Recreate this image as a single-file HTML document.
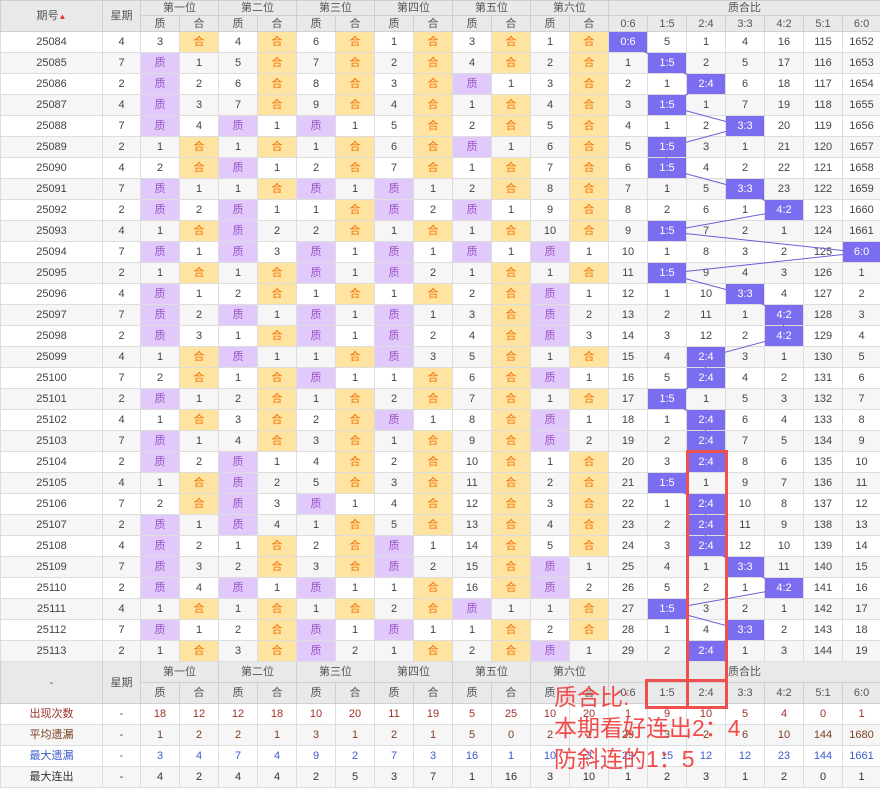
<!DOCTYPE html>
<html><head><meta charset="utf-8">
<style>
body{margin:0;width:880px;height:788px;overflow:hidden;background:#fff;font-family:"Liberation Sans","Noto Sans CJK SC",sans-serif;position:relative}
table{border-collapse:collapse;table-layout:fixed;width:880px;font-size:11px;color:#444;position:absolute;left:0;top:0}
td,th{border:1px solid #ddd;text-align:center;padding:0;white-space:nowrap;overflow:hidden;line-height:12px}
th{background:#e9e9e9;font-weight:normal;color:#555;font-size:11px;border-color:#d0d0d0}
tr.hd1 th{height:14px}tr.hd2 th{height:15px}
tr.d td{height:20px}
tr.d:nth-child(even) td{background:#f6f6f6}
tr.g td{border-top:1px solid #aaa}
td.z{background:#e2c9fb!important;color:#9a55c8}
td.h{background:#ffe3a1!important;color:#f27000}
td.k{background:#7b6df0!important;color:#fff;position:relative;z-index:3}
tr.f1 th{height:20px}tr.f2 th{height:20px}
tr.s td{height:20px}
tr.s:nth-child(even) td{background:#f6f6f6}
.r1 td{color:#a0332a}.r2 td{color:#7a3f20}.r3 td{color:#3b5bcc}.r4 td{color:#333}
.ov{position:absolute;color:#f24b4b;font-size:23px;left:554px;line-height:30px;z-index:5}
.bx{position:absolute;border:3px solid #ee5050;z-index:5}
svg{z-index:2}
</style></head><body>
<table>
<colgroup><col style="width:102px"><col style="width:38px"><col style="width:39px"><col style="width:39px"><col style="width:39px"><col style="width:39px"><col style="width:39px"><col style="width:39px"><col style="width:39px"><col style="width:39px"><col style="width:39px"><col style="width:39px"><col style="width:39px"><col style="width:39px"><col style="width:39px"><col style="width:39px"><col style="width:39px"><col style="width:39px"><col style="width:39px"><col style="width:39px"><col style="width:38px"></colgroup>
<tr class="hd1"><th rowspan="2">期号<span style="color:#e33;font-size:8px">▲</span></th><th rowspan="2">星期</th><th colspan="2">第一位</th><th colspan="2">第二位</th><th colspan="2">第三位</th><th colspan="2">第四位</th><th colspan="2">第五位</th><th colspan="2">第六位</th><th colspan="7">质合比</th></tr>
<tr class="hd2"><th>质</th><th>合</th><th>质</th><th>合</th><th>质</th><th>合</th><th>质</th><th>合</th><th>质</th><th>合</th><th>质</th><th>合</th><th>0:6</th><th>1:5</th><th>2:4</th><th>3:3</th><th>4:2</th><th>5:1</th><th>6:0</th></tr>
<tr class="d"><td>25084</td><td>4</td><td>3</td><td class="h">合</td><td>4</td><td class="h">合</td><td>6</td><td class="h">合</td><td>1</td><td class="h">合</td><td>3</td><td class="h">合</td><td>1</td><td class="h">合</td><td class="k">0:6</td><td>5</td><td>1</td><td>4</td><td>16</td><td>115</td><td>1652</td></tr>
<tr class="d"><td>25085</td><td>7</td><td class="z">质</td><td>1</td><td>5</td><td class="h">合</td><td>7</td><td class="h">合</td><td>2</td><td class="h">合</td><td>4</td><td class="h">合</td><td>2</td><td class="h">合</td><td>1</td><td class="k">1:5</td><td>2</td><td>5</td><td>17</td><td>116</td><td>1653</td></tr>
<tr class="d"><td>25086</td><td>2</td><td class="z">质</td><td>2</td><td>6</td><td class="h">合</td><td>8</td><td class="h">合</td><td>3</td><td class="h">合</td><td class="z">质</td><td>1</td><td>3</td><td class="h">合</td><td>2</td><td>1</td><td class="k">2:4</td><td>6</td><td>18</td><td>117</td><td>1654</td></tr>
<tr class="d"><td>25087</td><td>4</td><td class="z">质</td><td>3</td><td>7</td><td class="h">合</td><td>9</td><td class="h">合</td><td>4</td><td class="h">合</td><td>1</td><td class="h">合</td><td>4</td><td class="h">合</td><td>3</td><td class="k">1:5</td><td>1</td><td>7</td><td>19</td><td>118</td><td>1655</td></tr>
<tr class="d"><td>25088</td><td>7</td><td class="z">质</td><td>4</td><td class="z">质</td><td>1</td><td class="z">质</td><td>1</td><td>5</td><td class="h">合</td><td>2</td><td class="h">合</td><td>5</td><td class="h">合</td><td>4</td><td>1</td><td>2</td><td class="k">3:3</td><td>20</td><td>119</td><td>1656</td></tr>
<tr class="d g"><td>25089</td><td>2</td><td>1</td><td class="h">合</td><td>1</td><td class="h">合</td><td>1</td><td class="h">合</td><td>6</td><td class="h">合</td><td class="z">质</td><td>1</td><td>6</td><td class="h">合</td><td>5</td><td class="k">1:5</td><td>3</td><td>1</td><td>21</td><td>120</td><td>1657</td></tr>
<tr class="d"><td>25090</td><td>4</td><td>2</td><td class="h">合</td><td class="z">质</td><td>1</td><td>2</td><td class="h">合</td><td>7</td><td class="h">合</td><td>1</td><td class="h">合</td><td>7</td><td class="h">合</td><td>6</td><td class="k">1:5</td><td>4</td><td>2</td><td>22</td><td>121</td><td>1658</td></tr>
<tr class="d"><td>25091</td><td>7</td><td class="z">质</td><td>1</td><td>1</td><td class="h">合</td><td class="z">质</td><td>1</td><td class="z">质</td><td>1</td><td>2</td><td class="h">合</td><td>8</td><td class="h">合</td><td>7</td><td>1</td><td>5</td><td class="k">3:3</td><td>23</td><td>122</td><td>1659</td></tr>
<tr class="d"><td>25092</td><td>2</td><td class="z">质</td><td>2</td><td class="z">质</td><td>1</td><td>1</td><td class="h">合</td><td class="z">质</td><td>2</td><td class="z">质</td><td>1</td><td>9</td><td class="h">合</td><td>8</td><td>2</td><td>6</td><td>1</td><td class="k">4:2</td><td>123</td><td>1660</td></tr>
<tr class="d"><td>25093</td><td>4</td><td>1</td><td class="h">合</td><td class="z">质</td><td>2</td><td>2</td><td class="h">合</td><td>1</td><td class="h">合</td><td>1</td><td class="h">合</td><td>10</td><td class="h">合</td><td>9</td><td class="k">1:5</td><td>7</td><td>2</td><td>1</td><td>124</td><td>1661</td></tr>
<tr class="d g"><td>25094</td><td>7</td><td class="z">质</td><td>1</td><td class="z">质</td><td>3</td><td class="z">质</td><td>1</td><td class="z">质</td><td>1</td><td class="z">质</td><td>1</td><td class="z">质</td><td>1</td><td>10</td><td>1</td><td>8</td><td>3</td><td>2</td><td>125</td><td class="k">6:0</td></tr>
<tr class="d"><td>25095</td><td>2</td><td>1</td><td class="h">合</td><td>1</td><td class="h">合</td><td class="z">质</td><td>1</td><td class="z">质</td><td>2</td><td>1</td><td class="h">合</td><td>1</td><td class="h">合</td><td>11</td><td class="k">1:5</td><td>9</td><td>4</td><td>3</td><td>126</td><td>1</td></tr>
<tr class="d"><td>25096</td><td>4</td><td class="z">质</td><td>1</td><td>2</td><td class="h">合</td><td>1</td><td class="h">合</td><td>1</td><td class="h">合</td><td>2</td><td class="h">合</td><td class="z">质</td><td>1</td><td>12</td><td>1</td><td>10</td><td class="k">3:3</td><td>4</td><td>127</td><td>2</td></tr>
<tr class="d"><td>25097</td><td>7</td><td class="z">质</td><td>2</td><td class="z">质</td><td>1</td><td class="z">质</td><td>1</td><td class="z">质</td><td>1</td><td>3</td><td class="h">合</td><td class="z">质</td><td>2</td><td>13</td><td>2</td><td>11</td><td>1</td><td class="k">4:2</td><td>128</td><td>3</td></tr>
<tr class="d"><td>25098</td><td>2</td><td class="z">质</td><td>3</td><td>1</td><td class="h">合</td><td class="z">质</td><td>1</td><td class="z">质</td><td>2</td><td>4</td><td class="h">合</td><td class="z">质</td><td>3</td><td>14</td><td>3</td><td>12</td><td>2</td><td class="k">4:2</td><td>129</td><td>4</td></tr>
<tr class="d g"><td>25099</td><td>4</td><td>1</td><td class="h">合</td><td class="z">质</td><td>1</td><td>1</td><td class="h">合</td><td class="z">质</td><td>3</td><td>5</td><td class="h">合</td><td>1</td><td class="h">合</td><td>15</td><td>4</td><td class="k">2:4</td><td>3</td><td>1</td><td>130</td><td>5</td></tr>
<tr class="d"><td>25100</td><td>7</td><td>2</td><td class="h">合</td><td>1</td><td class="h">合</td><td class="z">质</td><td>1</td><td>1</td><td class="h">合</td><td>6</td><td class="h">合</td><td class="z">质</td><td>1</td><td>16</td><td>5</td><td class="k">2:4</td><td>4</td><td>2</td><td>131</td><td>6</td></tr>
<tr class="d"><td>25101</td><td>2</td><td class="z">质</td><td>1</td><td>2</td><td class="h">合</td><td>1</td><td class="h">合</td><td>2</td><td class="h">合</td><td>7</td><td class="h">合</td><td>1</td><td class="h">合</td><td>17</td><td class="k">1:5</td><td>1</td><td>5</td><td>3</td><td>132</td><td>7</td></tr>
<tr class="d"><td>25102</td><td>4</td><td>1</td><td class="h">合</td><td>3</td><td class="h">合</td><td>2</td><td class="h">合</td><td class="z">质</td><td>1</td><td>8</td><td class="h">合</td><td class="z">质</td><td>1</td><td>18</td><td>1</td><td class="k">2:4</td><td>6</td><td>4</td><td>133</td><td>8</td></tr>
<tr class="d"><td>25103</td><td>7</td><td class="z">质</td><td>1</td><td>4</td><td class="h">合</td><td>3</td><td class="h">合</td><td>1</td><td class="h">合</td><td>9</td><td class="h">合</td><td class="z">质</td><td>2</td><td>19</td><td>2</td><td class="k">2:4</td><td>7</td><td>5</td><td>134</td><td>9</td></tr>
<tr class="d g"><td>25104</td><td>2</td><td class="z">质</td><td>2</td><td class="z">质</td><td>1</td><td>4</td><td class="h">合</td><td>2</td><td class="h">合</td><td>10</td><td class="h">合</td><td>1</td><td class="h">合</td><td>20</td><td>3</td><td class="k">2:4</td><td>8</td><td>6</td><td>135</td><td>10</td></tr>
<tr class="d"><td>25105</td><td>4</td><td>1</td><td class="h">合</td><td class="z">质</td><td>2</td><td>5</td><td class="h">合</td><td>3</td><td class="h">合</td><td>11</td><td class="h">合</td><td>2</td><td class="h">合</td><td>21</td><td class="k">1:5</td><td>1</td><td>9</td><td>7</td><td>136</td><td>11</td></tr>
<tr class="d"><td>25106</td><td>7</td><td>2</td><td class="h">合</td><td class="z">质</td><td>3</td><td class="z">质</td><td>1</td><td>4</td><td class="h">合</td><td>12</td><td class="h">合</td><td>3</td><td class="h">合</td><td>22</td><td>1</td><td class="k">2:4</td><td>10</td><td>8</td><td>137</td><td>12</td></tr>
<tr class="d"><td>25107</td><td>2</td><td class="z">质</td><td>1</td><td class="z">质</td><td>4</td><td>1</td><td class="h">合</td><td>5</td><td class="h">合</td><td>13</td><td class="h">合</td><td>4</td><td class="h">合</td><td>23</td><td>2</td><td class="k">2:4</td><td>11</td><td>9</td><td>138</td><td>13</td></tr>
<tr class="d"><td>25108</td><td>4</td><td class="z">质</td><td>2</td><td>1</td><td class="h">合</td><td>2</td><td class="h">合</td><td class="z">质</td><td>1</td><td>14</td><td class="h">合</td><td>5</td><td class="h">合</td><td>24</td><td>3</td><td class="k">2:4</td><td>12</td><td>10</td><td>139</td><td>14</td></tr>
<tr class="d g"><td>25109</td><td>7</td><td class="z">质</td><td>3</td><td>2</td><td class="h">合</td><td>3</td><td class="h">合</td><td class="z">质</td><td>2</td><td>15</td><td class="h">合</td><td class="z">质</td><td>1</td><td>25</td><td>4</td><td>1</td><td class="k">3:3</td><td>11</td><td>140</td><td>15</td></tr>
<tr class="d"><td>25110</td><td>2</td><td class="z">质</td><td>4</td><td class="z">质</td><td>1</td><td class="z">质</td><td>1</td><td>1</td><td class="h">合</td><td>16</td><td class="h">合</td><td class="z">质</td><td>2</td><td>26</td><td>5</td><td>2</td><td>1</td><td class="k">4:2</td><td>141</td><td>16</td></tr>
<tr class="d"><td>25111</td><td>4</td><td>1</td><td class="h">合</td><td>1</td><td class="h">合</td><td>1</td><td class="h">合</td><td>2</td><td class="h">合</td><td class="z">质</td><td>1</td><td>1</td><td class="h">合</td><td>27</td><td class="k">1:5</td><td>3</td><td>2</td><td>1</td><td>142</td><td>17</td></tr>
<tr class="d"><td>25112</td><td>7</td><td class="z">质</td><td>1</td><td>2</td><td class="h">合</td><td class="z">质</td><td>1</td><td class="z">质</td><td>1</td><td>1</td><td class="h">合</td><td>2</td><td class="h">合</td><td>28</td><td>1</td><td>4</td><td class="k">3:3</td><td>2</td><td>143</td><td>18</td></tr>
<tr class="d"><td>25113</td><td>2</td><td>1</td><td class="h">合</td><td>3</td><td class="h">合</td><td class="z">质</td><td>2</td><td>1</td><td class="h">合</td><td>2</td><td class="h">合</td><td class="z">质</td><td>1</td><td>29</td><td>2</td><td class="k">2:4</td><td>1</td><td>3</td><td>144</td><td>19</td></tr>
<tr class="f1"><th rowspan="2">-</th><th rowspan="2">星期</th><th colspan="2">第一位</th><th colspan="2">第二位</th><th colspan="2">第三位</th><th colspan="2">第四位</th><th colspan="2">第五位</th><th colspan="2">第六位</th><th colspan="7">质合比</th></tr>
<tr class="f2"><th>质</th><th>合</th><th>质</th><th>合</th><th>质</th><th>合</th><th>质</th><th>合</th><th>质</th><th>合</th><th>质</th><th>合</th><th>0:6</th><th>1:5</th><th>2:4</th><th>3:3</th><th>4:2</th><th>5:1</th><th>6:0</th></tr>
<tr class="s r1"><td>出现次数</td><td>-</td><td>18</td><td>12</td><td>12</td><td>18</td><td>10</td><td>20</td><td>11</td><td>19</td><td>5</td><td>25</td><td>10</td><td>20</td><td>1</td><td>9</td><td>10</td><td>5</td><td>4</td><td>0</td><td>1</td></tr>
<tr class="s r2"><td>平均遗漏</td><td>-</td><td>1</td><td>2</td><td>2</td><td>1</td><td>3</td><td>1</td><td>2</td><td>1</td><td>5</td><td>0</td><td>2</td><td>1</td><td>29</td><td>3</td><td>2</td><td>6</td><td>10</td><td>144</td><td>1680</td></tr>
<tr class="s r3"><td>最大遗漏</td><td>-</td><td>3</td><td>4</td><td>7</td><td>4</td><td>9</td><td>2</td><td>7</td><td>3</td><td>16</td><td>1</td><td>10</td><td>3</td><td>29</td><td>15</td><td>12</td><td>12</td><td>23</td><td>144</td><td>1661</td></tr>
<tr class="s r4"><td>最大连出</td><td>-</td><td>4</td><td>2</td><td>4</td><td>4</td><td>2</td><td>5</td><td>3</td><td>7</td><td>1</td><td>16</td><td>3</td><td>10</td><td>1</td><td>2</td><td>3</td><td>1</td><td>2</td><td>0</td><td>1</td></tr>
</table>
<svg width="880" height="788" style="position:absolute;left:0;top:0;pointer-events:none">
<polyline fill="none" stroke="#6a5fd8" stroke-width="1" points="627.5,42.5 666.5,63.5 705.5,84.5 666.5,105.5 744.5,126.5 666.5,147.5 666.5,168.5 744.5,189.5 783.5,210.5 666.5,231.5 861.5,252.5 666.5,273.5 744.5,294.5 783.5,315.5 783.5,336.5 705.5,357.5 705.5,378.5 666.5,399.5 705.5,420.5 705.5,441.5 705.5,462.5 666.5,483.5 705.5,504.5 705.5,525.5 705.5,546.5 744.5,567.5 783.5,588.5 666.5,609.5 744.5,630.5 705.5,651.5"/>
</svg>
<div class="bx" style="left:686px;top:450px;width:36px;height:253px"></div>
<div class="bx" style="left:645px;top:679px;width:77px;height:24px"></div>
<div class="ov" style="top:682px">质合比:</div>
<div class="ov" style="top:713px">本期看好连出2：4</div>
<div class="ov" style="top:744px">防斜连的1：5</div>
</body></html>
